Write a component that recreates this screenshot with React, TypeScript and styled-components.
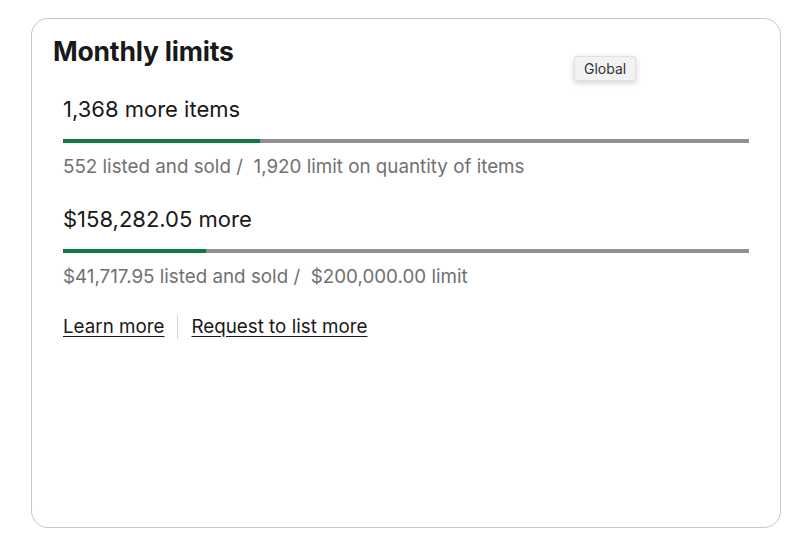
import styled, { createGlobalStyle } from "styled-components";

type Limit = {
  remaining: string;
  used: number;
  total: number;
  usedLabel: string;
  totalLabel: string;
};

const limits: Limit[] = [
  {
    remaining: "1,368 more items",
    used: 552,
    total: 1920,
    usedLabel: "552 listed and sold",
    totalLabel: "1,920 limit on quantity of items",
  },
  {
    remaining: "$158,282.05 more",
    used: 41717.95,
    total: 200000,
    usedLabel: "$41,717.95 listed and sold",
    totalLabel: "$200,000.00 limit",
  },
];

export default function App() {
  return (
    <>
      <GlobalStyle />
      <Page>
        <Card>
          <Title>Monthly limits</Title>
          <Tooltip>Global</Tooltip>
          <Body>
            {limits.map(limit => (
              <LimitBlock key={limit.remaining}>
                <Remaining>{limit.remaining}</Remaining>
                <Track>
                  <Fill style={{ width: `${(limit.used / limit.total) * 100}%` }} />
                </Track>
                <Usage>
                  {limit.usedLabel} /&nbsp; {limit.totalLabel}
                </Usage>
              </LimitBlock>
            ))}
            <Links>
              <Link href="#">Learn more</Link>
              <Divider />
              <Link href="#">Request to list more</Link>
            </Links>
          </Body>
        </Card>
      </Page>
    </>
  );
}

const GlobalStyle = createGlobalStyle`
  body {
    margin: 0;
    background: #fff;
    font-family: Inter, "Open Sans", Arial, sans-serif;
    color: #191919;
  }
`;

const Page = styled.main`
  padding: 18px 0 0 31px;
`;

const Card = styled.section`
  position: relative;
  box-sizing: border-box;
  width: 750px;
  height: 510px;
  border: 1px solid #c7c7c7;
  border-radius: 17px;
  padding: 16px 31px 0 21px;
`;

const Title = styled.h2`
  margin: 0;
  font-size: 26.5px;
  font-weight: 700;
  line-height: 32px;
  letter-spacing: -0.2px;
`;

const Tooltip = styled.div`
  position: absolute;
  top: 37px;
  left: 542px;
  padding: 3px 9px;
  font-size: 14px;
  color: #333;
  background: #f2f2f2;
  border: 1px solid #e0e0e0;
  border-radius: 2px;
  box-shadow: 0 2px 6px rgba(0, 0, 0, 0.18);
`;

const Body = styled.div`
  display: flex;
  flex-direction: column;
  gap: 26px;
  padding: 28px 0 0 10px;
`;

const LimitBlock = styled.div`
  display: flex;
  flex-direction: column;
`;

const Remaining = styled.div`
  font-size: 22px;
  line-height: 28px;
`;

const Track = styled.div`
  height: 4px;
  margin-top: 16px;
  background: #8f8f8f;
`;

const Fill = styled.div`
  height: 100%;
  background: #0e7a3e;
`;

const Usage = styled.div`
  margin-top: 12px;
  font-size: 18.8px;
  line-height: 24px;
  color: #707070;
`;

const Links = styled.div`
  display: flex;
  align-items: center;
  gap: 13px;
`;

const Link = styled.a`
  font-size: 18.8px;
  line-height: 24px;
  color: #191919;
  text-decoration: underline;
  text-underline-offset: 3px;
`;

const Divider = styled.span`
  width: 1px;
  height: 24px;
  background: #d6d6d6;
`;
